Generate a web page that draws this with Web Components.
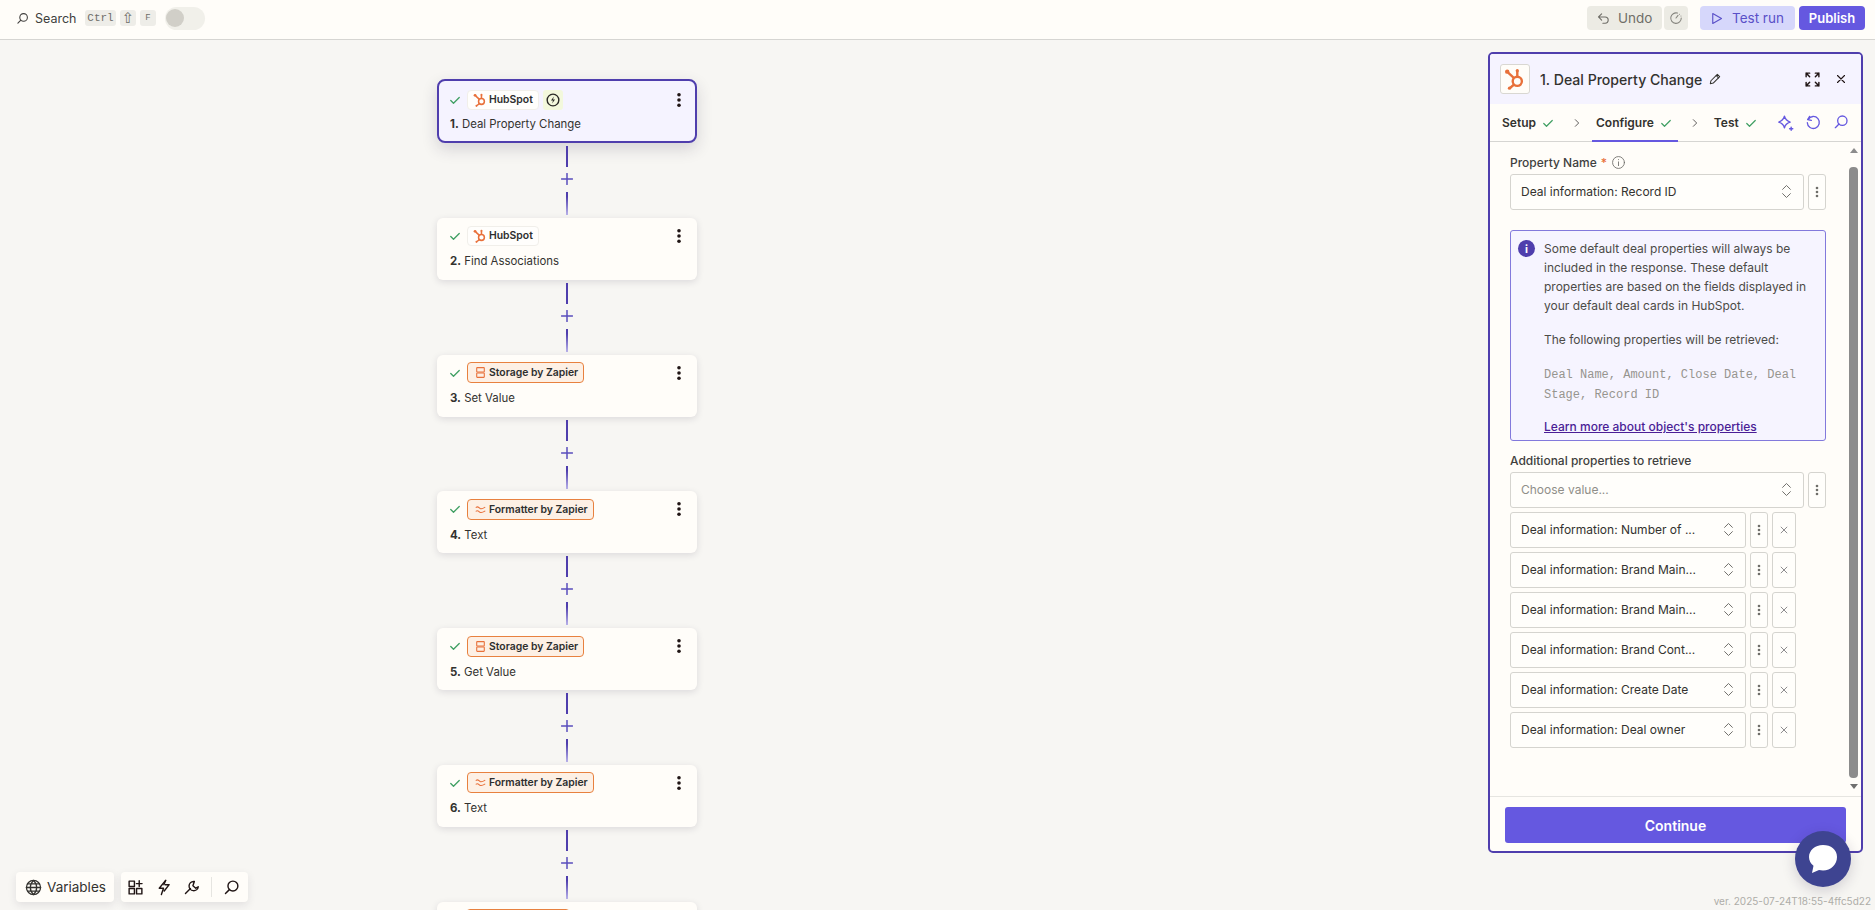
<!DOCTYPE html>
<html lang="en"><head><meta charset="utf-8"><title>Zap editor</title>
<style>
html,body{margin:0;height:910px;overflow:hidden;background:#f7f6f3;font-family:Inter,"Liberation Sans",sans-serif;color:#2d2e2e}
</style></head><body>
<zap-app></zap-app>
<script>
const P={
search:'<circle cx="14" cy="10" r="7"/><path d="M9 15l-5.5 5.5"/>',
check:'<path d="M3.5 13l5.5 5.5L20.5 7"/>',
x:'<path d="M5 5l14 14M19 5L5 19"/>',
undo:'<path d="M9 4.5L4 9.5l5 5M4 9.5h10.5a5 5 0 0 1 0 10H11"/>',
clock:'<path d="M14.5 3.6A9 9 0 1 0 21 12"/><path d="M12 12l3.5-4.5"/><path d="M18 5.5h.01M20.5 8.500h.01"/>',
play:'<path d="M6 4l14 8-14 8z"/>',
pencil:'<path d="M4 20l1-5L16 4l4 4L9 19z"/><path d="M14 6l4 4"/>',
expand:'<path d="M3 8V3h5M3 3l5 5M21 8V3h-5M21 3l-5 5M3 16v5h5M3 21l5-5M21 16v5h-5M21 21l-5-5"/>',
spark:'<path d="M10.500 3c1 4 3 6.500 8 8.500-5 1.500-7 4-8 8-1-4-3-6.500-8-8 5-2 7-4.500 8-8.500z"/><path d="M20 18.500v4.500M17.750 20.750h4.500"/>',
rotate:'<path d="M7 3.500L4 8.500l5.500 1"/><path d="M4.800 8A9 9 0 1 1 3.500 13"/>',
chev:'<path d="M8 4l8 8-8 8"/>',
ud:'<path d="M6.500 9L12 3.500 17.500 9M6.500 15l5.500 5.500 5.500-5.500"/>',
info:'<circle cx="12" cy="12" r="9.500"/><path d="M12 11v6"/><path d="M12 7.300v.2"/>',
globe:'<circle cx="12" cy="12" r="10"/><path d="M2 12h20M12 2c-6 6-6 14 0 20M12 2c6 6 6 14 0 20M3.500 7h17M3.500 17h17"/>',
apps:'<rect x="3" y="3" width="7.500" height="7.500"/><rect x="3" y="13.500" width="7.500" height="7.500"/><rect x="13.500" y="13.500" width="7.500" height="7.500"/><path d="M17.250 2.500v8M13.250 6.500h8"/>',
bolt:'<path d="M15 2L6 13h6l-3 9M14.500 8H20l-7 9"/><path d="M15 2l-2.500 6"/>',
wrench:'<path d="M10.500 13.500L3.500 20.500"/><path d="M15 3.500a6.500 6.500 0 1 0 6.500 7.500l-3.500 2-4-3.500 2-6z"/>',
db:'<rect x="5" y="3" width="14" height="8" rx="1"/><rect x="5" y="13" width="14" height="8" rx="1"/>',
wave:'<path d="M4 8c4-3 5 2 8 2.500S17 10 20 8M4 15c4-3 5 2 8 2.500s5-.500 8-2.500"/>',
plus:'<path d="M12 1v22M1 12h22"/>'
};
class ZIcon extends HTMLElement{connectedCallback(){
 const s=this.getAttribute('size')||16,w=this.getAttribute('w')||2,c=this.getAttribute('color')||'currentColor',n=this.getAttribute('name');
 this.attachShadow({mode:'open'}).innerHTML=`<style>:host{display:inline-flex;flex:none;width:${s}px;height:${s}px}svg{display:block}</style><svg width="${s}" height="${s}" viewBox="0 0 24 24" fill="none" stroke="${c}" stroke-width="${w}" stroke-linecap="round" stroke-linejoin="round">${P[n]}</svg>`;
}}
customElements.define('z-icon',ZIcon);

class ZDots extends HTMLElement{connectedCallback(){
 const r=Number(this.getAttribute('r')||1.6),g=Number(this.getAttribute('g')||5),c=this.getAttribute('color')||'#201515';
 this.attachShadow({mode:'open'}).innerHTML=`<style>:host{display:inline-flex;flex:none}</style><svg width="6" height="16" viewBox="0 0 6 16"><circle cx="3" cy="${8-g}" r="${r}" fill="${c}"/><circle cx="3" cy="8" r="${r}" fill="${c}"/><circle cx="3" cy="${8+g}" r="${r}" fill="${c}"/></svg>`;
}}
customElements.define('z-dots',ZDots);

class HubLogo extends HTMLElement{connectedCallback(){
 const s=this.getAttribute('size')||14;
 this.attachShadow({mode:'open'}).innerHTML=`<style>:host{display:inline-flex;flex:none}</style><svg width="${s}" height="${s}" viewBox="0 0 24 24" fill="none" stroke="#e8703a" stroke-width="2.600"><circle cx="14.500" cy="14.500" r="5"/><path d="M14.500 9V3.500M11 11L4.500 5M11 18l-4 3.500"/><circle cx="14.500" cy="3" r="1.800" fill="#e8703a" stroke="none"/><circle cx="3.500" cy="4" r="2.400" fill="#e8703a" stroke="none"/><circle cx="6" cy="22" r="1.800" fill="#e8703a" stroke="none"/></svg>`;
}}
customElements.define('hub-logo',HubLogo);

class ZTopbar extends HTMLElement{connectedCallback(){
 this.attachShadow({mode:'open'}).innerHTML=`<style>
 :host{display:flex;align-items:center;height:40px;box-sizing:border-box;background:#fffdf9;border-bottom:1px solid #d6d5d2;padding:0 10px 3px 16px;font-size:12.500px;flex:none}
 .s{display:flex;align-items:center;gap:6px;color:#403f3e;width:59px}
 kbd{font:11px "Liberation Mono",monospace;background:#eeede8;color:#6f6e6a;border-radius:3px;height:16px;display:inline-flex;align-items:center;justify-content:center;box-sizing:border-box}
 .k{display:flex;gap:4px;margin-left:10px;align-items:center}
 .t{width:40px;height:23px;border-radius:12px;background:#f1f0ea;margin-left:9px;display:flex;align-items:center;padding-left:1px;box-sizing:border-box}
 .t i{width:18px;height:18px;border-radius:50%;background:#d1cfc8;display:block}
 .sp{flex:1}
 .b{height:24px;border-radius:4px;display:inline-flex;align-items:center;box-sizing:border-box;font-size:13.500px}
 .u{width:75px;background:#ecebe4;color:#6f6e68;padding-left:9px;gap:7px}
 .c{width:24px;background:#ecebe4;color:#85847e;margin-left:2px;justify-content:center}
 .r{width:95px;background:#d6d7fb;color:#5a50c8;margin-left:12px;padding-left:9px;gap:8px}
 .p{width:66px;background:#6558e0;color:#fff;margin-left:4px;justify-content:center;font-weight:600;font-size:13px}
 </style>
 <div class="s"><z-icon name="search" size="13" w="2"></z-icon><span>Search</span></div>
 <div class="k"><kbd style="width:31px">Ctrl</kbd><kbd style="width:16px;font:15px 'DejaVu Sans',sans-serif">⇧</kbd><kbd style="width:16px;font-size:9px">F</kbd></div>
 <div class="t"><i></i></div><div class="sp"></div>
 <div class="b u"><z-icon name="undo" size="15" w="1.800"></z-icon><span>Undo</span></div>
 <div class="b c"><z-icon name="clock" size="14" w="1.800"></z-icon></div>
 <div class="b r"><z-icon name="play" size="15" w="1.800"></z-icon><span>Test run</span></div>
 <div class="b p">Publish</div>`;
}}
customElements.define('z-topbar',ZTopbar);

class FlowCard extends HTMLElement{connectedCallback(){
 const app=this.getAttribute('app')||'',n=this.getAttribute('n'),title=this.getAttribute('heading')||'',act=this.hasAttribute('active'),trig=this.hasAttribute('trigger'),clip=this.hasAttribute('clip');
 const hub=app==='HubSpot';
 const ic=hub?'<hub-logo size="14"></hub-logo>':clip?'':`<z-icon name="${app.startsWith('Storage')?'db':'wave'}" size="13" w="2" color="#e8703a"></z-icon>`;
 this.attachShadow({mode:'open'}).innerHTML=`<style>
 :host{display:block;width:260px;box-sizing:border-box;height:${act?64:62}px;flex:none;background:${act?'#f5f3ff':'#fffdf9'};border-radius:${act?8:6}px;padding:${act?'8px 13px 0 10px':'7.500px 15px 0 12px'};${act?'border:2px solid #4f3ead;box-shadow:0 6px 16px rgba(40,30,60,.16);':'box-shadow:0 2px 7px rgba(40,30,60,.13);'}}
 .top{display:flex;align-items:center;height:21px;gap:6px}
 .pill{display:inline-flex;align-items:center;gap:2px;height:${hub?20:21}px;box-sizing:border-box;padding:0 5px 0 ${hub?5:6}px;border-radius:4px;font-size:10.400px;font-weight:600;color:#2d2e2e;${clip?'width:104px;':''}${hub?'background:#fffefc;border:1px solid #f1efea;':'background:#fdf0e5;border:1px solid #e8813f;'}}
 .tr{width:20px;height:20px;border-radius:3px;background:#f3f8dc;display:inline-flex;align-items:center;justify-content:center;margin-left:-2px}
 .sp{flex:1}
 .t{font-size:11.400px;margin:${act?5:6}px 0 0 1px;line-height:18px;color:#33322f}b{font-weight:700}
 </style>${clip?`<div class="top" style="padding-left:17px"><span class="pill"></span></div>`:`<div class="top"><z-icon name="check" size="12" w="2.600" color="#3f9f63"></z-icon><span class="pill">${ic}<span>${app}</span></span>
 ${trig?'<span class="tr"><svg width="14" height="14" viewBox="0 0 24 24" fill="none" stroke="#2b2a27" stroke-width="2.400"><circle cx="12" cy="12" r="10"/><path d="M13.500 6l-5 7h3.500l-1.500 5 5-7h-3.500z" fill="#2b2a27" stroke="none"/></svg></span>':''}
 <span class="sp"></span><z-dots r="1.800" g="5.300"></z-dots></div><div class="t"><b>${n}.</b> ${title}</div>`}`;
}}
customElements.define('flow-card',FlowCard);

class FlowConn extends HTMLElement{connectedCallback(){
 this.attachShadow({mode:'open'}).innerHTML=`<style>
 :host{display:flex;flex-direction:column;align-items:center;height:74.800px;width:260px;flex:none;box-sizing:border-box;padding-top:3px}
 .a{width:2px;height:21px;background:#4f3ead}
 .pl{height:12px;margin:6px 0 7px;display:flex}
 .b{width:2px;height:23px;background:linear-gradient(#4f3ead 20%,#b9b2ea)}
 </style><div class="a"></div><div class="pl"><z-icon name="plus" size="12" w="3" color="#5a4dbd"></z-icon></div><div class="b"></div>`;
}}
customElements.define('flow-conn',FlowConn);

class ZSelect extends HTMLElement{connectedCallback(){
 const w=this.getAttribute('w'),ph=this.hasAttribute('ph'),rm=this.hasAttribute('rm');
 this.attachShadow({mode:'open'}).innerHTML=`<style>
 :host{display:flex;gap:4px;height:35.500px;flex:none}
 .s,.k,.x{box-sizing:border-box;height:100%;border:1px solid #d5d4cf;border-radius:3px;background:#fffefb;display:flex;align-items:center}
 .s{width:${w}px;padding:0 8px 0 10px;font-size:12px;color:${ph?'#8f8e89':'#33322f'}}
 .s span{flex:1;white-space:nowrap;overflow:hidden}
 .k{width:18px;justify-content:center}.x{width:24px;justify-content:center}
 </style><div class="s"><span><slot></slot></span><z-icon name="ud" size="17" w="1.400" color="#6f6e6a"></z-icon></div><div class="k"><z-dots r="1.300" g="4" color="#6f6e6a"></z-dots></div>${rm?'<div class="x"><z-icon name="x" size="10" w="2" color="#77767a"></z-icon></div>':''}`;
}}
customElements.define('z-select',ZSelect);

class InfoBox extends HTMLElement{connectedCallback(){
 this.attachShadow({mode:'open'}).innerHTML=`<style>
 :host{display:flex;box-sizing:border-box;width:316px;height:211px;flex:none;border:1px solid #8279dc;border-radius:3px;background:#f6f4ff;padding:7.500px 10px 0 7px;gap:9px;font-size:12px;line-height:19.300px;color:#4c4b47}
 .i{flex:none;width:17px;height:17px;border-radius:50%;background:#4f3ead;margin-top:1.500px;display:flex;align-items:center;justify-content:center;color:#fff;font:700 11px Inter,sans-serif}
 p{margin:0 0 14.500px}p+p{margin-bottom:15.500px}
 code{font:12px/20px "Liberation Mono",monospace;color:#96958f;display:block;margin-bottom:12px}
 a{color:#4a1d96;text-decoration:underline;font-weight:500}
 </style><div class="i">i</div><div><p>Some default deal properties will always be included in the response. These default properties are based on the fields displayed in your default deal cards in HubSpot.</p><p>The following properties will be retrieved:</p><code>Deal Name, Amount, Close Date, Deal Stage, Record ID</code><a href="#">Learn more about object's properties</a></div>`;
}}
customElements.define('info-box',InfoBox);

class SidePanel extends HTMLElement{connectedCallback(){
 const tab=(t,cur)=>`<span class="tab${cur?' cur':''}">${t}<z-icon name="check" size="12" w="2.400" color="#3f9f63"></z-icon></span>`;
 const rows=['Deal information: Number of ...','Deal information: Brand Main...','Deal information: Brand Main...','Deal information: Brand Cont...','Deal information: Create Date','Deal information: Deal owner'];
 this.attachShadow({mode:'open'}).innerHTML=`<style>
 :host{display:flex;flex-direction:column;box-sizing:border-box;width:375px;height:801px;margin:12px 12px 0 0;flex:none;border:2px solid #4f3ead;border-radius:5px;background:#fffdf9;overflow:hidden;align-self:flex-start}
 header{height:50px;flex:none;background:#f5f3ff;display:flex;align-items:center;padding:0 14px 0 10px;box-sizing:border-box}
 .lg{width:30px;height:30px;box-sizing:border-box;border:1px solid #d9d7d2;border-radius:3px;background:#fffdf9;display:flex;align-items:center;justify-content:center}
 h1{font-size:14.100px;font-weight:500;margin:0 6px 0 10px;color:#33322f}
 .sp{flex:1}
 nav{height:38px;flex:none;box-sizing:border-box;border-bottom:1px solid #d6d5d2;display:flex;align-items:center;padding:0 12px 0 12px;position:relative;font-size:12px;font-weight:600}
 .tab{display:flex;align-items:center;gap:6px;height:100%;color:#33322f;box-sizing:border-box}
 .tab.cur{border-bottom:2px solid #6558e0;margin-bottom:-1px;padding:1px 6px 0 4px}
 .c1{margin:0 10px 0 18px}.c2{margin:0 14px 0 12px}
 .ic{display:flex;gap:12px;color:#6558e0}
 .body{flex:1;display:flex;min-height:0}
 .main{flex:1;padding:12px 0 0 20px;display:flex;flex-direction:column;min-width:0}
 label{font-size:12px;font-weight:500;color:#403f3e;display:flex;align-items:center;height:16px;gap:4px;margin-bottom:4px}
 .req{color:#e8703a}
 info-box{margin:20.500px 0 11px}
 .list{display:flex;flex-direction:column;gap:4.500px}
 .bar{width:9px;margin:0 3px 7px 0;display:flex;flex-direction:column;align-items:center;padding-top:6px;box-sizing:border-box;flex:none}
 .up,.dn{width:0;height:0;border-left:4.500px solid transparent;border-right:4.500px solid transparent}
 .up{border-bottom:5px solid #8c8c8c}.dn{border-top:5px solid #6f6f6f}
 .th{flex:1;width:9px;background:#8c8c8c;border-radius:4px;margin:14px 0 6px}
 footer{height:55px;flex:none;border-top:1px solid #e6e5e1;box-sizing:border-box;padding:10px 15px 0}
 button{display:block;width:100%;height:36px;background:#6558e0;border:0;border-radius:3px;color:#fff;font:600 14px Inter,sans-serif}
 </style>
 <header><div class="lg"><hub-logo size="22"></hub-logo></div><h1>1. Deal Property Change</h1><z-icon name="pencil" size="14" w="1.800" color="#33322f"></z-icon><span class="sp"></span><z-icon name="expand" size="17" w="2" color="#201515"></z-icon><z-icon name="x" size="12" w="2.200" color="#201515" style="margin-left:14px"></z-icon></header>
 <nav>${tab('Setup')}<z-icon class="c1" name="chev" size="10" w="2" color="#403f3e"></z-icon>${tab('Configure',1)}<z-icon class="c2" name="chev" size="10" w="2" color="#403f3e"></z-icon>${tab('Test')}<span class="sp"></span><div class="ic"><z-icon name="spark" size="17" w="2"></z-icon><z-icon name="rotate" size="16" w="2" style="margin-left:-1px"></z-icon><z-icon name="search" size="16" w="2"></z-icon></div></nav>
 <div class="body"><div class="main">
 <label>Property Name <span class="req">*</span> <z-icon name="info" size="15" w="1.400" color="#6f6e6a" style="margin-left:0"></z-icon></label>
 <z-select w="294">Deal information: Record ID</z-select>
 <info-box></info-box>
 <label>Additional properties to retrieve</label>
 <div class="list"><z-select w="294" ph>Choose value...</z-select>${rows.map(r=>`<z-select w="236" rm>${r}</z-select>`).join('')}</div>
 </div><div class="bar"><i class="up"></i><i class="th"></i><i class="dn"></i></div></div>
 <footer><button>Continue</button></footer>`;
}}
customElements.define('side-panel',SidePanel);

class ZTools extends HTMLElement{connectedCallback(){
 this.attachShadow({mode:'open'}).innerHTML=`<style>
 :host{position:absolute;left:16px;top:832px;display:flex;gap:7px;color:#201515}
 .g{height:30px;background:#fffdf9;border-radius:4px;box-shadow:0 3px 8px rgba(40,30,60,.1);display:flex;align-items:center;box-sizing:border-box}
 .v{width:98px;padding-left:9px;gap:5px;font-size:13.500px;color:#33322f}
 .i{width:127px;padding-left:6px;gap:11px}.d{width:1px;height:20px;background:#e6e5e1}
 </style><div class="g v"><z-icon name="globe" size="17" w="1.800"></z-icon><span>Variables</span></div>
 <div class="g i"><z-icon name="apps" size="17" w="2"></z-icon><z-icon name="bolt" size="17" w="2"></z-icon><z-icon name="wrench" size="17" w="2"></z-icon><i class="d"></i><z-icon name="search" size="17" w="2"></z-icon></div>`;
}}
customElements.define('z-tools',ZTools);

class ZChat extends HTMLElement{connectedCallback(){
 this.attachShadow({mode:'open'}).innerHTML=`<style>
 :host{position:absolute;left:1795px;top:791px;width:56px;height:56px;border-radius:50%;background:#3e4491;display:flex;align-items:center;justify-content:center;box-shadow:0 4px 14px rgba(40,30,60,.18)}
 </style><svg width="30" height="30" viewBox="0 0 30 30"><path d="M15 1C7 1 1 6.500 1 13c0 3.500 1.800 6.600 4.500 8.800L4 29l7-3c1.300.300 2.600.500 4 .500 8 0 14-6 14-13.500S23 1 15 1z" fill="#fff"/></svg>`;
}}
customElements.define('z-chat',ZChat);

class ZapApp extends HTMLElement{connectedCallback(){
 const cards=[['HubSpot','Deal Property Change','active trigger'],['HubSpot','Find Associations',''],['Storage by Zapier','Set Value',''],['Formatter by Zapier','Text',''],['Storage by Zapier','Get Value',''],['Formatter by Zapier','Text','']];
 this.attachShadow({mode:'open'}).innerHTML=`<style>
 :host{display:flex;flex-direction:column;height:910px;position:relative}
 .w{flex:1;display:flex;position:relative;min-height:0;overflow:hidden;background:#f7f6f3}
 .c{flex:1;display:flex;flex-direction:column;padding:39px 0 0 437px;overflow:hidden;min-width:0}
 .ver{position:absolute;right:4px;bottom:3px;font-size:10px;color:#aeada8}
 </style><z-topbar></z-topbar><div class="w"><div class="c">
 ${cards.map((c,i)=>`<flow-card app="${c[0]}" n="${i+1}" heading="${c[1]}" ${c[2]}></flow-card><flow-conn></flow-conn>`).join('')}<flow-card clip app="x"></flow-card>
 </div><side-panel></side-panel><z-tools></z-tools><z-chat></z-chat><div class="ver">ver. 2025-07-24T18:55-4ffc5d22</div></div>`;
}}
customElements.define('zap-app',ZapApp);
</script>
</body></html>
